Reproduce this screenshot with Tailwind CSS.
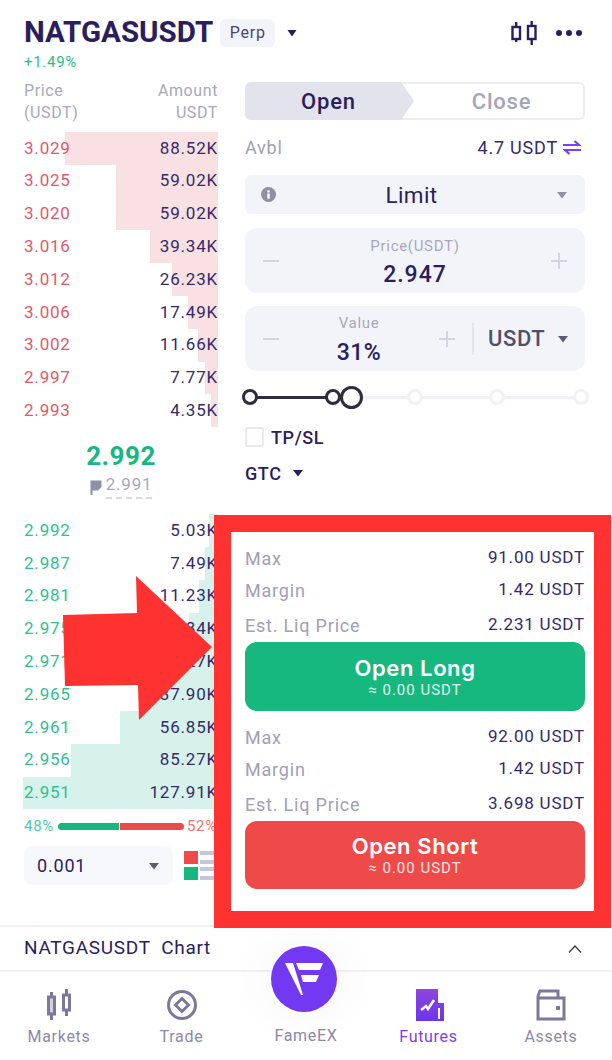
<!DOCTYPE html>
<html lang="en">
<head>
  <meta charset="UTF-8">
  <meta name="viewport" content="width=device-width, initial-scale=1.0">
  <title>NATGASUSDT Futures</title>
  <script src="https://cdn.jsdelivr.net/npm/@tailwindcss/browser@4"></script>
</head>
<body class="bg-white">
<div class="relative w-[612px] h-[1060px] overflow-hidden font-['Roboto','Liberation_Sans',sans-serif] text-[#2a1e5c]">

  <!-- header -->
  <div class="h-[80px] pl-6 pr-[30px] pt-[18px]">
    <div class="flex items-center h-[30px]">
      <span class="text-[29.500px] font-bold leading-none">NATGASUSDT</span>
      <span class="ml-[7px] w-[55px] h-[28px] rounded-md bg-[#f3f4f9] flex items-center justify-center text-[16px] text-[#4b4570] tracking-[0.8px]">Perp</span>
      <svg class="ml-[12px]" width="10" height="8" viewBox="0 0 10 8"><path d="M0.5 1h9L5 7.5z" fill="#2a1e5c"/></svg>
      <svg class="ml-auto" width="26" height="26" viewBox="0 0 26 26" fill="none" stroke="#2a1e5c" stroke-width="2.4">
        <rect x="1.500" y="7" width="7.500" height="12"/><path d="M5.200 2v5M5.200 19v3"/>
        <rect x="17" y="6" width="7.500" height="13"/><path d="M20.700 1v5M20.700 19v6"/>
      </svg>
      <div class="ml-[19px] flex gap-[4px]">
        <span class="w-[6px] h-[6px] rounded-full bg-[#2a1e5c]"></span>
        <span class="w-[6px] h-[6px] rounded-full bg-[#2a1e5c]"></span>
        <span class="w-[6px] h-[6px] rounded-full bg-[#2a1e5c]"></span>
      </div>
    </div>
    <div class="mt-[6px] text-[15px] leading-[16px] text-[#1fbf8a] tracking-[0.7px]">+1.49%</div>
  </div>

  <div class="flex h-[845px]">
    <!-- order book -->
    <div class="w-[218px] ml-6 shrink-0">
      <div class="flex justify-between w-[194px] h-[52px] text-[16px] leading-[22px] text-[#a9a7bd] tracking-[0.6px]">
        <div>Price<br>(USDT)</div>
        <div class="text-right">Amount<br>USDT</div>
      </div>
      <div class="w-[194px] text-[17px] tracking-[0.8px] text-[#352a69]">
        <div class="relative h-[32.8px] flex items-center justify-between"><div class="absolute inset-y-0 right-0 w-[153px] bg-[#f9e1e3]"></div><span class="relative text-[#e0596a]">3.029</span><span class="relative">88.52K</span></div>
        <div class="relative h-[32.8px] flex items-center justify-between"><div class="absolute inset-y-0 right-0 w-[102px] bg-[#f9e1e3]"></div><span class="relative text-[#e0596a]">3.025</span><span class="relative">59.02K</span></div>
        <div class="relative h-[32.8px] flex items-center justify-between"><div class="absolute inset-y-0 right-0 w-[102px] bg-[#f9e1e3]"></div><span class="relative text-[#e0596a]">3.020</span><span class="relative">59.02K</span></div>
        <div class="relative h-[32.8px] flex items-center justify-between"><div class="absolute inset-y-0 right-0 w-[68px] bg-[#f9e1e3]"></div><span class="relative text-[#e0596a]">3.016</span><span class="relative">39.34K</span></div>
        <div class="relative h-[32.8px] flex items-center justify-between"><div class="absolute inset-y-0 right-0 w-[46px] bg-[#f9e1e3]"></div><span class="relative text-[#e0596a]">3.012</span><span class="relative">26.23K</span></div>
        <div class="relative h-[32.8px] flex items-center justify-between"><div class="absolute inset-y-0 right-0 w-[30px] bg-[#f9e1e3]"></div><span class="relative text-[#e0596a]">3.006</span><span class="relative">17.49K</span></div>
        <div class="relative h-[32.8px] flex items-center justify-between"><div class="absolute inset-y-0 right-0 w-[20px] bg-[#f9e1e3]"></div><span class="relative text-[#e0596a]">3.002</span><span class="relative">11.66K</span></div>
        <div class="relative h-[32.8px] flex items-center justify-between"><div class="absolute inset-y-0 right-0 w-[13px] bg-[#f9e1e3]"></div><span class="relative text-[#e0596a]">2.997</span><span class="relative">7.77K</span></div>
        <div class="relative h-[32.8px] flex items-center justify-between"><div class="absolute inset-y-0 right-0 w-[7px] bg-[#f9e1e3]"></div><span class="relative text-[#e0596a]">2.993</span><span class="relative">4.35K</span></div>
      </div>

      <!-- last price -->
      <div class="h-[87px] w-[194px] flex flex-col items-center pt-[13px]">
        <div class="text-[26px] leading-[32px] font-bold text-[#17b87f] tracking-[0.5px]">2.992</div>
        <div class="flex items-center mt-[3px] h-[24px]">
          <svg width="12" height="16" viewBox="0 0 12 16" class="mr-[4px]"><path d="M0.5 1.500H11.500V8L8 11.500H2.500V16H0.500z" fill="#8f8fa8"/></svg>
          <span class="text-[17px] text-[#a9a7bd] tracking-[0.8px] border-b-2 border-dashed border-[#d9d9e6] pb-[3px] leading-[19px]">2.991</span>
        </div>
      </div>

      <div class="w-[194px] text-[17px] tracking-[0.8px] text-[#352a69]">
        <div class="relative h-[32.8px] flex items-center justify-between"><div class="absolute inset-y-0 right-0 w-[9px] bg-[#d6f2ea]"></div><span class="relative text-[#2fbf92]">2.992</span><span class="relative">5.03K</span></div>
        <div class="relative h-[32.8px] flex items-center justify-between"><div class="absolute inset-y-0 right-0 w-[13px] bg-[#d6f2ea]"></div><span class="relative text-[#2fbf92]">2.987</span><span class="relative">7.49K</span></div>
        <div class="relative h-[32.8px] flex items-center justify-between"><div class="absolute inset-y-0 right-0 w-[19px] bg-[#d6f2ea]"></div><span class="relative text-[#2fbf92]">2.981</span><span class="relative">11.23K</span></div>
        <div class="relative h-[32.8px] flex items-center justify-between"><div class="absolute inset-y-0 right-0 w-[29px] bg-[#d6f2ea]"></div><span class="relative text-[#2fbf92]">2.975</span><span class="relative">16.84K</span></div>
        <div class="relative h-[32.8px] flex items-center justify-between"><div class="absolute inset-y-0 right-0 w-[43px] bg-[#d6f2ea]"></div><span class="relative text-[#2fbf92]">2.971</span><span class="relative">25.27K</span></div>
        <div class="relative h-[32.8px] flex items-center justify-between"><div class="absolute inset-y-0 right-0 w-[65px] bg-[#d6f2ea]"></div><span class="relative text-[#2fbf92]">2.965</span><span class="relative">37.90K</span></div>
        <div class="relative h-[32.8px] flex items-center justify-between"><div class="absolute inset-y-0 right-0 w-[98px] bg-[#d6f2ea]"></div><span class="relative text-[#2fbf92]">2.961</span><span class="relative">56.85K</span></div>
        <div class="relative h-[32.8px] flex items-center justify-between"><div class="absolute inset-y-0 right-0 w-[147px] bg-[#d6f2ea]"></div><span class="relative text-[#2fbf92]">2.956</span><span class="relative">85.27K</span></div>
        <div class="relative h-[32.8px] flex items-center justify-between"><div class="absolute inset-y-0 right-0 w-[195px] bg-[#d6f2ea]"></div><span class="relative text-[#2fbf92]">2.951</span><span class="relative">127.91K</span></div>
      </div>

      <!-- ratio bar -->
      <div class="w-[194px] h-[37px] pb-[3px] flex items-center text-[15px] tracking-[0.7px]">
        <span class="text-[#4fcba3]">48%</span>
        <div class="ml-[4px] w-[126px] shrink-0 flex gap-[1px] h-[7px]">
          <div class="w-[61px] bg-[#17b87f] rounded-l-full"></div>
          <div class="flex-1 bg-[#ef4a4a] rounded-r-full"></div>
        </div>
        <span class="ml-[3px] text-[#f27070]">52%</span>
      </div>

      <div class="flex items-center w-[194px]">
        <div class="w-[149px] h-[39px] rounded-lg bg-[#f7f8fb] flex items-center justify-between pl-[13px] pr-[14px] text-[18px] tracking-[0.8px]">
          <span>0.001</span>
          <svg width="10" height="8" viewBox="0 0 10 8"><path d="M0 1h10L5 7.500z" fill="#5b5b75"/></svg>
        </div>
        <div class="ml-[11px] grid grid-cols-[14px_14px] gap-x-[2px] gap-y-[3px]">
          <div class="h-[13px] bg-[#ef4a4a]"></div>
          <div class="flex flex-col justify-between h-[13px]"><span class="h-[4px] bg-[#c6c7d6]"></span><span class="h-[4px] bg-[#c6c7d6]"></span></div>
          <div class="h-[13px] bg-[#17b87f]"></div>
          <div class="flex flex-col justify-between h-[13px]"><span class="h-[4px] bg-[#c6c7d6]"></span><span class="h-[4px] bg-[#c6c7d6]"></span></div>
        </div>
      </div>
    </div>

    <!-- order form -->
    <div class="w-[340px] ml-[3px] shrink-0">
      <div class="relative h-[38px] mt-[2px] rounded-md border-2 border-[#ecedf4] flex text-[22px] font-medium tracking-[0.8px]">
        <div class="w-[156px] -ml-[2px] -my-[2px] bg-[#e2e3ec] rounded-l-md flex items-center justify-center pl-[11px]">Open</div>
        <svg class="-my-[2px] shrink-0" width="13" height="38" viewBox="0 0 13 38"><path d="M0 0L13 19L0 38z" fill="#e2e3ec"/></svg>
        <div class="flex-1 flex items-center justify-center text-[#a5a5b9] pl-[6px]">Close</div>
      </div>

      <div class="flex items-center justify-between h-[55px] pb-[1px] text-[18px] tracking-[0.8px]">
        <span class="text-[#a0a0b6]">Avbl</span>
        <span class="flex items-center text-[#352a69] pr-[4px]">4.7 USDT
          <svg class="ml-[5px]" width="18" height="15" viewBox="0 0 18 15" fill="none" stroke="#7a3ff0" stroke-width="2.200"><path d="M0 5h16L11.500 1M18 10H2l4.500 4"/></svg>
        </span>
      </div>

      <div class="h-[39px] rounded-md bg-[#f3f4f9] flex items-center justify-between pl-[16px] pr-[18px] text-[22.500px] tracking-[0.4px]">
        <svg width="15" height="15" viewBox="0 0 15 15"><circle cx="7.500" cy="7.500" r="7.500" fill="#8f8fa8"/><rect x="6.300" y="6.500" width="2.400" height="5.200" fill="#fff"/><rect x="6.300" y="3.300" width="2.400" height="2.200" fill="#fff"/></svg>
        <span class="pr-[10px] pt-[3px]">Limit</span>
        <svg width="10" height="8" viewBox="0 0 10 8"><path d="M0 1h10L5 7.500z" fill="#8f8fa8"/></svg>
      </div>

      <div class="mt-[14px] h-[65px] rounded-xl bg-[#f3f4f9] flex items-center justify-between px-[18px]">
        <svg width="16" height="16" viewBox="0 0 16 16"><rect y="7" width="16" height="2" fill="#d3d4e0"/></svg>
        <div class="flex flex-col items-center pt-[3px]">
          <span class="text-[15px] leading-[20px] text-[#a9a7bd] tracking-[0.7px]">Price(USDT)</span>
          <span class="mt-[5px] text-[23px] leading-[28px] font-medium tracking-[1px]">2.947</span>
        </div>
        <svg width="16" height="16" viewBox="0 0 16 16"><path d="M0 7h16v2H0zM7 0h2v16H7z" fill="#d3d4e0"/></svg>
      </div>

      <div class="mt-[13px] h-[65px] rounded-xl bg-[#f3f4f9] flex items-center pl-[18px] pr-[17px]">
        <svg width="16" height="16" viewBox="0 0 16 16"><rect y="7" width="16" height="2" fill="#d3d4e0"/></svg>
        <div class="w-[160px] flex flex-col items-center pt-[2px]">
          <span class="text-[15px] leading-[20px] text-[#a9a7bd] tracking-[0.7px]">Value</span>
          <span class="mt-[6px] text-[23px] leading-[28px] font-medium tracking-[0.5px]">31%</span>
        </div>
        <svg width="16" height="16" viewBox="0 0 16 16"><path d="M0 7h16v2H0zM7 0h2v16H7z" fill="#d3d4e0"/></svg>
        <div class="ml-[17px] w-[2px] h-[32px] bg-[#e3e4ed]"></div>
        <span class="ml-[14px] text-[22px] font-medium text-[#4f4f6b] tracking-[0.6px]">USDT</span>
        <svg class="ml-auto" width="10" height="8" viewBox="0 0 10 8"><path d="M0 1h10L5 7.500z" fill="#5b5b75"/></svg>
      </div>

      <!-- slider -->
      <div class="relative h-[24px] mt-[14px] -ml-[3px] w-[347px] flex items-center">
        <div class="absolute left-[4px] right-[4px] h-[3px] bg-[#f0f1f7]"></div>
        <div class="absolute left-[4px] w-[100px] h-[3px] bg-[#2e2d3d]"></div>
        <div class="relative flex justify-between items-center w-full">
          <span class="w-[16px] h-[16px] rounded-full border-[3px] border-[#2e2d3d] bg-white"></span>
          <span class="absolute left-[83px] w-[16px] h-[16px] rounded-full border-[3px] border-[#2e2d3d] bg-white"></span>
          <span class="absolute left-[98px] w-[23px] h-[23px] rounded-full border-[3px] border-[#2e2d3d] bg-white"></span>
          <span class="absolute left-[165px] w-[16px] h-[16px] rounded-full border-[3px] border-[#f0f1f7] bg-white"></span>
          <span class="absolute left-[247px] w-[16px] h-[16px] rounded-full border-[3px] border-[#f0f1f7] bg-white"></span>
          <span class="w-[16px] h-[16px] rounded-full border-[3px] border-[#f0f1f7] bg-white"></span>
        </div>
      </div>

      <div class="flex items-center h-[20px] mt-[18px]">
        <span class="w-[19px] h-[20px] rounded-[2px] border-2 border-[#e9eaf1] bg-white"></span>
        <span class="ml-[7px] text-[18px] font-medium tracking-[0.6px]">TP/SL</span>
      </div>
      <div class="flex items-center h-[20px] mt-[16px]">
        <span class="text-[18px] font-medium tracking-[0.6px]">GTC</span>
        <svg class="ml-[11px]" width="10" height="8" viewBox="0 0 10 8"><path d="M0 1h10L5 7.500z" fill="#2a1e5c"/></svg>
      </div>

      <!-- long -->
      <div class="mt-[59px] flex flex-col text-[17px] tracking-[0.8px] text-[#352a69]">
        <div class="flex justify-between h-[32px] items-center"><span class="text-[18px] text-[#a0a0b6]">Max</span><span>91.00 USDT</span></div>
        <div class="flex justify-between h-[32px] items-center"><span class="text-[18px] text-[#a0a0b6]">Margin</span><span>1.42 USDT</span></div>
        <div class="flex justify-between h-[38px] items-center"><span class="text-[18px] text-[#a0a0b6]">Est. Liq Price</span><span>2.231 USDT</span></div>
      </div>
      <div class="-mt-[2px] h-[69px] rounded-xl bg-[#17b87f] text-white flex flex-col items-center justify-center">
        <span class="font-['Inter'] text-[22px] leading-[26px] font-semibold tracking-[0.6px]">Open Long</span>
        <span class="text-[15px] leading-[18px] tracking-[1px] text-white/85">≈ 0.00 USDT</span>
      </div>

      <!-- short -->
      <div class="mt-[10px] flex flex-col text-[17px] tracking-[0.8px] text-[#352a69]">
        <div class="flex justify-between h-[32px] items-center"><span class="text-[18px] text-[#a0a0b6]">Max</span><span>92.00 USDT</span></div>
        <div class="flex justify-between h-[32px] items-center"><span class="text-[18px] text-[#a0a0b6]">Margin</span><span>1.42 USDT</span></div>
        <div class="flex justify-between h-[38px] items-center"><span class="text-[18px] text-[#a0a0b6]">Est. Liq Price</span><span>3.698 USDT</span></div>
      </div>
      <div class="-mt-[2px] h-[68px] rounded-xl bg-[#ef4a4a] text-white flex flex-col items-center justify-center">
        <span class="font-['Inter'] text-[22px] leading-[26px] font-semibold tracking-[0.6px]">Open Short</span>
        <span class="text-[15px] leading-[18px] tracking-[1px] text-white/85">≈ 0.00 USDT</span>
      </div>
    </div>
  </div>

  <!-- chart toggle -->
  <div class="h-[47px] border-y-2 border-[#f1f1f5] flex items-center justify-between pl-6 pr-[30px] text-[19px] tracking-[0.7px]">
    <span class="whitespace-pre">NATGASUSDT  Chart</span>
    <svg width="14" height="8" viewBox="0 0 14 8" fill="none" stroke="#3a3a50" stroke-width="1.300"><path d="M1 7.500L7 1l6 6.500"/></svg>
  </div>

  <!-- bottom nav -->
  <div class="flex h-[88px] text-[16px] tracking-[0.7px] text-[#8d89a8]">
    <div class="w-[118px] flex flex-col items-center pt-[17px]">
      <svg width="26" height="32" viewBox="0 0 26 32" fill="none" stroke="#7d7799" stroke-width="3"><rect x="2.500" y="8" width="6" height="17" fill="#7d7799" fill-opacity=".35"/><path d="M5.500 3v5M5.500 25v6"/><rect x="17.500" y="6" width="6" height="15"/><path d="M20.500 0v6M20.500 21v6"/></svg>
      <span class="mt-[5px] leading-[22px]">Markets</span>
    </div>
    <div class="w-[127px] flex flex-col items-center pt-[17px]">
      <svg width="32" height="32" viewBox="0 0 32 32" fill="none" stroke="#7d7799"><circle cx="16" cy="16" r="13.500" stroke-width="3"/><path d="M16 9.500L22.500 16L16 22.500L9.500 16z" stroke-width="3"/></svg>
      <span class="mt-[5px] leading-[22px]">Trade</span>
    </div>
    <div class="w-[122px] flex flex-col items-center justify-end pb-[13px]"><span class="leading-[22px]">FameEX</span></div>
    <div class="w-[123px] flex flex-col items-center pt-[17px] text-[#7a3ff0]">
      <svg width="30" height="32" viewBox="0 0 30 32"><defs><linearGradient id="fut" x1="0" y1="0" x2="0" y2="1"><stop offset="0" stop-color="#8f45d8"/><stop offset="1" stop-color="#6b35ee"/></linearGradient></defs><path d="M2 0H24V14H30V32H2z" fill="url(#fut)"/><path d="M7 21l5-4 2 3 6-9" fill="none" stroke="#fff" stroke-width="2.500"/><rect x="24" y="19" width="2" height="11" fill="#fff"/></svg>
      <span class="mt-[5px] leading-[22px]">Futures</span>
    </div>
    <div class="w-[122px] flex flex-col items-center pt-[17px]">
      <svg width="30" height="32" viewBox="0 0 30 32" fill="none" stroke="#7d7799" stroke-width="3"><path d="M2 7V30H28V9H2M2 7L4 2H22V9"/><rect x="20" y="17" width="4" height="4" fill="#7d7799" stroke="none"/></svg>
      <span class="mt-[5px] leading-[22px]">Assets</span>
    </div>
  </div>

  <!-- center logo -->
  <div class="absolute left-[271px] top-[946px] w-[66px] h-[66px] rounded-full bg-[#7338f2] flex items-center justify-center shadow-[0_0_50px_rgba(0,0,0,0.06)]">
    <svg width="38" height="34" viewBox="0 0 38 34" fill="#fff"><path d="M0 1H8L18 33L16 33z"/><path d="M11 1H38L35 8H14z"/><path d="M16 13H34L31 20H18z"/></svg>
  </div>

  <!-- annotation frame -->
  <div class="absolute left-[214px] top-[515px] w-[397px] h-[413px] border-[17px] border-[#ff3232]"></div>
  <svg class="absolute left-0 top-0 pointer-events-none" width="612" height="1060"><polygon points="63,615 137,613 136,576 212,647 139,720 138,685 65,686" fill="#ff3232"/></svg>
</div>
</body>
</html>
